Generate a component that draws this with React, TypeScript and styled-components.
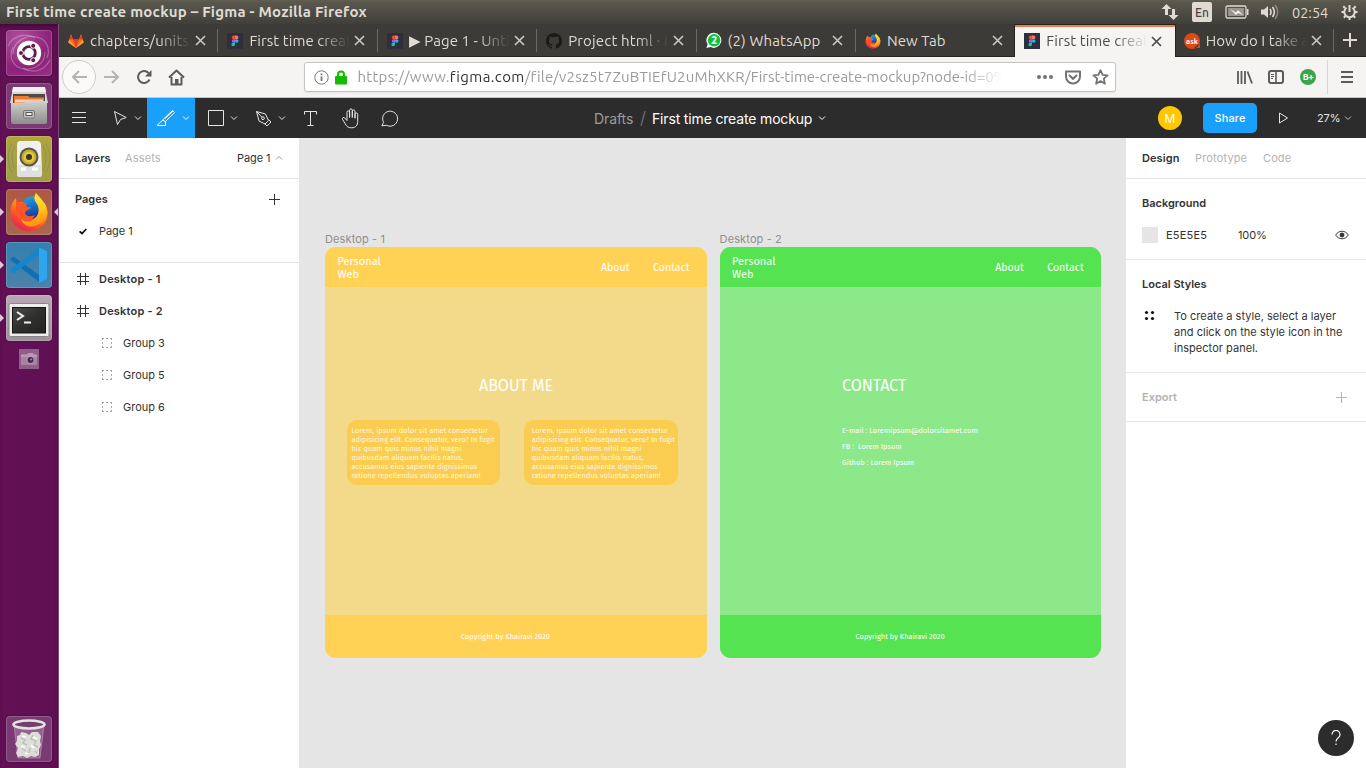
import React from "react";
import styled, { createGlobalStyle, css } from "styled-components";

const uiFont = `Ubuntu, "Noto Sans", "Open Sans", sans-serif`;
const figmaFont = `Inter, "Liberation Sans", sans-serif`;

const GlobalStyle = createGlobalStyle`
  * { box-sizing: border-box; }
  body { margin: 0; background: #fff; overflow: hidden; }
  svg { display: block; flex: none; }
`;

/* ---------- desktop shell ---------- */

const Screen = styled.div`
  width: 1366px;
  height: 768px;
  display: flex;
  flex-direction: column;
  overflow: hidden;
`;

const SystemBar = styled.header`
  height: 24px;
  flex: none;
  display: flex;
  align-items: center;
  justify-content: space-between;
  padding: 0 8px 0 6px;
  background: linear-gradient(#5f5d4f 0, #59574d 3px, #403f3a 100%);
  color: #dfdbd2;
  font-family: ${uiFont};
`;

const WindowTitle = styled.span`
  font-size: 15px;
  font-weight: 700;
  line-height: 24px;
  letter-spacing: 0.22px;
  white-space: pre;
`;

const Indicators = styled.div`
  display: flex;
  align-items: center;
  height: 24px;
`;

const LangBadge = styled.span`
  width: 20px;
  height: 20px;
  margin: 0 13px 0 13px;
  border-radius: 2px;
  background: #dfdbd2;
  color: #45443f;
  font-size: 12px;
  line-height: 21px;
  text-align: center;
  font-weight: 500;
`;

const Clock = styled.span`
  width: 37px;
  margin: 0 12px;
  font-size: 14.5px;
  letter-spacing: 0;
  white-space: nowrap;
`;

const Desktop = styled.div`
  flex: 1;
  display: flex;
  min-height: 0;
`;

const Launcher = styled.nav`
  width: 59px;
  flex: none;
  display: flex;
  flex-direction: column;
  align-items: center;
  gap: 7px;
  padding: 6px 1px 6px 0;
  background: linear-gradient(90deg, #641056, #5f1053);
  border-right: 1px solid #824a79;
  box-shadow: inset 0 4px 4px -2px #3d0735;
`;

const Slot = styled.div`
  width: 58px;
  height: 46px;
  flex: none;
  display: flex;
  align-items: center;
  justify-content: space-between;
`;

const Arrow = styled.i<{ $show?: boolean; $flip?: boolean }>`
  width: 0;
  height: 0;
  border: 4px solid transparent;
  ${(p) => (p.$flip ? css`border-left-width: 0; border-right-color: ${p.$show ? "#dcc9d9" : "transparent"};`
    : css`border-right-width: 0; border-left-color: ${p.$show ? "#dcc9d9" : "transparent"};`)}
`;

const Tile = styled.div<{ $bg: string }>`
  width: 46px;
  height: 46px;
  border-radius: 4px;
  background: ${(p) => p.$bg};
  box-shadow: inset 0 0 0 1px rgba(255, 255, 255, 0.18), 0 0 2px rgba(30, 0, 25, 0.5);
`;

const MiniTile = styled.div`
  width: 20px;
  height: 20px;
  margin-top: 1px;
  background: #8f5f8a;
`;

const Spacer = styled.div`
  flex: 1;
`;

/* ---------- browser ---------- */

const Browser = styled.div`
  flex: 1;
  min-width: 0;
  display: flex;
  flex-direction: column;
  font-family: ${uiFont};
`;

const TabStrip = styled.div`
  height: 33px;
  flex: none;
  display: flex;
  background: #3c3b37;
  border-bottom: 1px solid #262522;
`;

const Tab = styled.div<{ $active?: boolean; $divider?: boolean }>`
  position: relative;
  width: 159.4px;
  flex: none;
  height: ${(p) => (p.$active ? 33 : 32)}px;
  display: flex;
  align-items: center;
  padding: 1px 10px 0 9px;
  color: ${(p) => (p.$active ? "#4c4c4c" : "#dfdbd2")};
  ${(p) => p.$active && css`
    background: #f5f4f2;
    box-shadow: inset 0 1px #252422, inset 0 3px #f0794f, -1px 0 #252422, 1px 0 #252422;
  `}
  &::after {
    content: "";
    position: absolute;
    right: 0;
    top: 5px;
    width: 1px;
    height: 23px;
    background: ${(p) => (p.$divider ? "#6b6a65" : "transparent")};
  }
`;

const TabTitle = styled.span<{ $fade?: boolean; $ls?: number }>`
  width: 101px;
  margin-left: 6px;
  overflow: hidden;
  white-space: pre;
  font-size: 15px;
  line-height: 24px;
  letter-spacing: ${(p) => p.$ls ?? 0.05}px;
  ${(p) => p.$fade && css`mask-image: linear-gradient(90deg, #000 68px, transparent 101px);`}
`;

const CloseBox = styled.div`
  width: 16px;
  height: 16px;
  display: flex;
  align-items: center;
  justify-content: center;
  margin-left: auto;
`;

const NewTab = styled.div`
  flex: 1;
  display: flex;
  align-items: center;
  justify-content: center;
`;

const NavBar = styled.div`
  height: 41px;
  flex: none;
  display: flex;
  align-items: center;
  background: #f5f4f2;
  border-bottom: 1px solid #c9c7c4;
  color: #5b5b5a;
`;

const BackButton = styled.div`
  width: 34px;
  height: 34px;
  margin-left: 3px;
  border: 1px solid #cfcdca;
  border-radius: 50%;
  background: #faf9f8;
  display: flex;
  align-items: center;
  justify-content: center;
`;

const NavIcon = styled.div<{ $ml: number }>`
  margin-left: ${(p) => p.$ml}px;
`;

const UrlBar = styled.div`
  width: 812px;
  height: 30px;
  margin-left: 119px;
  display: flex;
  align-items: center;
  padding: 0 5px 0 9px;
  background: #fff;
  border: 1px solid #c6c4c0;
  border-radius: 3px;
  box-shadow: 0 1px 2px rgba(0, 0, 0, 0.06);
`;

const UrlText = styled.span`
  width: 645px;
  flex: none;
  margin-left: 10.5px;
  overflow: hidden;
  white-space: nowrap;
  font-size: 15px;
  line-height: 24px;
  color: #9b9b9b;
  mask-image: linear-gradient(90deg, #000 605px, transparent 645px);
`;

const UrlPart = styled.span<{ $ls: number; $host?: boolean }>`
  letter-spacing: ${(p) => p.$ls}px;
  color: ${(p) => (p.$host ? "#333" : "inherit")};
`;

const NavEnd = styled.div`
  margin-left: auto;
  height: 34px;
  padding: 0 13px;
  border-left: 1px solid #d7d5d2;
  display: flex;
  align-items: center;
`;

const ExtensionBadge = styled.div`
  width: 16px;
  height: 16px;
  margin: 0 11px 0 16px;
  border-radius: 50%;
  background: #3aa648;
  color: #fff;
  font: 700 9px/16px ${uiFont};
  text-align: center;
  letter-spacing: -0.2px;
`;

/* ---------- editor ---------- */

const Toolbar = styled.div`
  height: 40px;
  flex: none;
  display: flex;
  background: #2c2c2c;
  color: #e5e5e5;
  font-family: ${figmaFont};
`;

const Tool = styled.div<{ $w: number; $active?: boolean; $pl?: number }>`
  width: ${(p) => p.$w}px;
  height: 40px;
  display: flex;
  align-items: center;
  justify-content: center;
  gap: 6px;
  padding-left: ${(p) => p.$pl ?? 0}px;
  background: ${(p) => (p.$active ? "#18a0fb" : "transparent")};
`;

const FileName = styled.div`
  margin-left: 184px;
  display: flex;
  align-items: center;
  font-size: 14px;
  white-space: nowrap;
  color: #fff;
`;

const Folder = styled.span`
  width: 40px;
  color: #9b9b9b;
  letter-spacing: -0.1px;
`;

const Slash = styled.span`
  width: 18px;
  color: #7b7b7b;
  text-align: center;
  font-size: 17px;
  font-weight: 300;
`;

const FileTitle = styled.span`
  width: 161px;
  margin-right: 5px;
  letter-spacing: -0.16px;
`;

const Actions = styled.div`
  margin-left: auto;
  display: flex;
  align-items: center;
  padding-right: 14px;
`;

const Avatar = styled.div`
  width: 24px;
  height: 24px;
  border-radius: 50%;
  background: #ffc700;
  color: #fff;
  font-size: 12px;
  line-height: 25px;
  text-align: center;
`;

const ShareButton = styled.button`
  width: 54px;
  height: 30px;
  margin: 0 21px;
  padding: 0;
  border: 0;
  border-radius: 5px;
  background: #18a0fb;
  color: #fff;
  font: 500 11px ${figmaFont};
  letter-spacing: 0.1px;
`;

const Zoom = styled.span`
  width: 22px;
  margin: 0 5px 0 28px;
  font-size: 11px;
  letter-spacing: -0.15px;
`;

const Workspace = styled.div`
  flex: 1;
  min-height: 0;
  display: flex;
  font-family: ${figmaFont};
  font-size: 11px;
  line-height: 16px;
  letter-spacing: 0.055px;
  color: #333;
`;

const SidePanel = styled.aside<{ $w: number; $border?: boolean }>`
  width: ${(p) => p.$w}px;
  flex: none;
  background: #fff;
  border-right: ${(p) => (p.$border ? "1px solid #e5e5e5" : "0")};
`;

const Section = styled.section<{ $h: number; $pt?: number }>`
  height: ${(p) => p.$h}px;
  padding: ${(p) => p.$pt ?? 0}px 16px 0 16px;
  border-bottom: 1px solid #e5e5e5;
`;

const Row = styled.div<{ $h?: number; $pl?: number }>`
  height: ${(p) => p.$h ?? 32}px;
  display: flex;
  align-items: center;
  padding-left: ${(p) => p.$pl ?? 0}px;
`;

const Label = styled.span<{ $bold?: boolean; $muted?: boolean; $w?: number; $ls?: number }>`
  white-space: nowrap;
  font-weight: ${(p) => (p.$bold ? 600 : 400)};
  color: ${(p) => (p.$muted ? "#b3b3b3" : "#333")};
  width: ${(p) => (p.$w ? `${p.$w}px` : "auto")};
  letter-spacing: ${(p) => p.$ls ?? 0}px;
`;

const LayerList = styled.div`
  padding: 0 16px;
`;

const IconCell = styled.div`
  width: 16px;
  height: 16px;
  margin-right: 8px;
  display: flex;
  align-items: center;
  justify-content: center;
`;

const Swatch = styled.div`
  width: 16px;
  height: 16px;
  background: #e5e5e5;
  margin-right: 8px;
`;

const Hint = styled.p`
  margin: 0 0 0 17px;
  white-space: pre;
  letter-spacing: 0.035px;
`;

const StyleHint = styled.div`
  display: flex;
  margin-top: 16px;
`;

const HelpButton = styled.div`
  position: absolute;
  left: 1318px;
  top: 720px;
  width: 36px;
  height: 36px;
  border-radius: 50%;
  background: #2c2c2c;
  display: flex;
  align-items: center;
  justify-content: center;
`;

/* ---------- canvas ---------- */

const Canvas = styled.main`
  flex: 1;
  position: relative;
  background: #e5e5e5;
  overflow: hidden;
`;

const FrameNode = styled.div<{ $x: number; $w: number }>`
  position: absolute;
  left: ${(p) => p.$x}px;
  top: 93px;
  width: ${(p) => p.$w}px;
`;

const FrameLabel = styled.div`
  height: 16px;
  color: #8f8f8f;
  font-size: 11px;
  letter-spacing: 0.12px;
`;

const Artboard = styled.div<{ $bg: string }>`
  height: 411px;
  border-radius: 11px;
  overflow: hidden;
  display: flex;
  flex-direction: column;
  background: ${(p) => p.$bg};
  color: #fff;
  font-family: "Fira Sans", "Noto Sans", sans-serif;
  letter-spacing: 0;
`;

const SiteHeader = styled.div<{ $bg: string }>`
  height: 40px;
  flex: none;
  display: flex;
  align-items: center;
  padding: 1px 17px 0 12.4px;
  background: ${(p) => p.$bg};
  font-size: 10.6px;
  line-height: 13px;
`;

const Brand = styled.div`
  flex: 1;
  font-size: 11px;
  letter-spacing: 0.03px;
`;

const SiteLink = styled.span<{ $w: number }>`
  width: ${(p) => p.$w}px;
  white-space: nowrap;
`;

const SiteBody = styled.div<{ $pl?: number }>`
  flex: 1;
  padding: 88px 0 0 ${(p) => p.$pl ?? 0}px;
`;

const Heading = styled.h1<{ $pl?: number }>`
  margin: 0;
  padding-left: ${(p) => p.$pl ?? 0}px;
  font-size: 16.2px;
  line-height: 21px;
  font-weight: 400;
  letter-spacing: -0.13px;
`;

const Cards = styled.div`
  display: flex;
  gap: 24px;
  margin-top: 24.2px;
  padding-left: 21.5px;
`;

const Card = styled.div<{ $pl: number }>`
  width: 153.5px;
  height: 65px;
  border-radius: 10px;
  background: #facd50;
  padding: 5.8px 0 0 ${(p) => p.$pl}px;
  font-size: 7.45px;
  line-height: 9px;
  white-space: pre;
  color: #fff6dc;
`;

const ContactLine = styled.div`
  height: 16px;
  font-size: 7.45px;
  line-height: 16px;
  white-space: pre;
`;

const ContactList = styled.div`
  margin-top: 27px;
`;

const SiteFooter = styled.div<{ $bg: string }>`
  height: 43px;
  flex: none;
  padding-left: 136px;
  background: ${(p) => p.$bg};
  font-size: 7.45px;
  line-height: 43px;
  white-space: nowrap;
`;

/* ---------- icons ---------- */

const Chevron = ({ up, color = "#e5e5e5" }: { up?: boolean; color?: string }) => (
  <svg width="8" height="8" viewBox="0 0 8 8" fill="none" stroke={color}>
    <path d={up ? "M1 5.5 4 2.5 7 5.5" : "M1 2.5 4 5.5 7 2.5"} />
  </svg>
);

const Cross = ({ color }: { color: string }) => (
  <svg width="11" height="11" viewBox="0 0 11 11" stroke={color} strokeWidth="1.7">
    <path d="M1 1 10 10M10 1 1 10" />
  </svg>
);

const Plus = ({ size, color, sw = 1 }: { size: number; color: string; sw?: number }) => (
  <svg width={size} height={size} viewBox={`0 0 ${size} ${size}`} stroke={color} strokeWidth={sw}>
    <path d={`M${size / 2} 0V${size}M0 ${size / 2}H${size}`} />
  </svg>
);

const FigmaLogo = () => (
  <svg width="16" height="16" viewBox="0 0 16 16">
    <rect width="16" height="16" fill="#2d2f3f" />
    <path d="M8 2.6H6.6a1.8 1.8 0 0 0 0 3.6H8z" fill="#f24e1e" />
    <path d="M8 2.6h1.6a1.8 1.8 0 0 1 0 3.6H8z" fill="#ff7262" />
    <path d="M8 6.2H6.6a1.8 1.8 0 0 0 0 3.6H8z" fill="#a259ff" />
    <circle cx="9.7" cy="8" r="1.8" fill="#1abcfe" />
    <path d="M8 9.8H6.6a1.8 1.8 0 1 0 1.4 1.8z" fill="#0acf83" />
  </svg>
);

const GitlabLogo = () => (
  <svg width="16" height="16" viewBox="0 0 16 16">
    <path d="M8 15 0.3 9.4 3 1.2 5 6.6h6l2-5.4 2.7 8.2z" fill="#fc6d26" />
    <path d="M8 15 5 6.6h6z" fill="#e24329" />
    <path d="M0.3 9.4 1.2 6.6 8 15zM15.7 9.4 14.8 6.6 8 15z" fill="#fca326" />
    <path d="M3 1.2 5 6.6H1.2zM13 1.2 11 6.6h3.8z" fill="#e24329" />
  </svg>
);

const GithubLogo = () => (
  <svg width="16" height="16" viewBox="0 0 16 16" fill="#1b1a19">
    <path d="M8 0C3.58 0 0 3.58 0 8c0 3.54 2.29 6.53 5.47 7.59.4.07.55-.17.55-.38 0-.19-.01-.82-.01-1.49-2.01.37-2.53-.49-2.69-.94-.09-.23-.48-.94-.82-1.13-.28-.15-.68-.52-.01-.53.63-.01 1.08.58 1.23.82.72 1.21 1.87.87 2.33.66.07-.52.28-.87.51-1.07-1.78-.2-3.64-.89-3.64-3.95 0-.87.31-1.59.82-2.15-.08-.2-.36-1.02.08-2.12 0 0 .67-.21 2.2.82a7.6 7.6 0 0 1 4 0c1.53-1.04 2.2-.82 2.2-.82.44 1.1.16 1.92.08 2.12.51.56.82 1.27.82 2.15 0 3.07-1.87 3.75-3.65 3.95.29.25.54.73.54 1.48 0 1.07-.01 1.93-.01 2.2 0 .21.15.46.55.38A8 8 0 0 0 16 8c0-4.42-3.58-8-8-8z" />
  </svg>
);

const WhatsappBadge = () => (
  <svg width="16" height="17" viewBox="0 0 17 17">
    <path d="M8.5.3a8 8 0 1 1-3.7 15.2L.5 16.6l1.2-4A8 8 0 0 1 8.5.3z" fill="#fff" />
    <circle cx="8.6" cy="8.3" r="6.6" fill="#09c43c" />
    <text x="8.6" y="12.1" textAnchor="middle" fill="#fff" fontFamily="Noto Sans" fontWeight="700" fontSize="10.5">2</text>
  </svg>
);

const FirefoxLogo = ({ size }: { size: number }) => (
  <svg width={size} height={size} viewBox="0 0 40 40">
    <defs>
      <linearGradient id="fxBody" x1="0.8" y1="0" x2="0.2" y2="1">
        <stop offset="0" stopColor="#ffe226" />
        <stop offset="0.35" stopColor="#ff9a1c" />
        <stop offset="0.62" stopColor="#ff5a1f" />
        <stop offset="1" stopColor="#e8175d" />
      </linearGradient>
      <linearGradient id="fxGlobe" x1="0.3" y1="0" x2="0.5" y2="1">
        <stop offset="0" stopColor="#1ba4ee" />
        <stop offset="1" stopColor="#1b2f97" />
      </linearGradient>
      <linearGradient id="fxFlame" x1="0" y1="0" x2="0.3" y2="1">
        <stop offset="0" stopColor="#fff04a" />
        <stop offset="0.6" stopColor="#ffcf1d" />
        <stop offset="1" stopColor="#ff9317" />
      </linearGradient>
    </defs>
    <path d="M1.500 22C1 14 4 9 7 6c0 3 1 4 2 5 2-1 4-1 6 0 2-5 6-7 11-6 8 2 13 9 12.500 17-.500 10-8.500 17-18.500 17S2 32 1.500 22z" fill="url(#fxBody)" />
    <path d="M15 8c3-3.500 8-4.500 12-2 4 3 5 8 4 13s-5 8-9.500 8S13 24 13 20z" fill="url(#fxGlobe)" />
    <path d="M27 1c-3 5-1 8 1 11 3 5 2 12-4 16-4 2.500-9 2-12-1 2 6 8 9 14 7 7-2 12-8 12-15C38 12 32 7 27 1z" fill="url(#fxFlame)" />
    <path d="M7 7c1 3 4 4 6 4 2-1 4-1 5 0-1 1-1 3 0 4h4c-1 3-6 3-6 6 1 4 6 4 10 2-2 5-7 7-12 5-5-2-8-7-7-12z" fill="#ff5426" />
  </svg>
);

const AskLogo = () => (
  <svg width="16" height="16" viewBox="0 0 16 16">
    <path d="M8 0a8 8 0 1 1 0 16A8 8 0 0 1 8 0zM10 15h6v-5z" fill="#dd4814" />
    <text x="8" y="10.5" textAnchor="middle" fill="#fff" fontFamily="Ubuntu, Noto Sans" fontWeight="700" fontSize="7.5">ask</text>
  </svg>
);

const DashIcon = () => (
  <svg width="46" height="46" viewBox="0 0 46 46" fill="none">
    <g stroke="#fff" strokeOpacity="0.28" strokeWidth="1.2">
      <path d="M7 24C7 10 24 2 36 9c6 4 8 12 5 19" />
      <path d="M2 16C8 4 22 3 29 8M39 22c0 14-16 21-27 15C6 33 3 26 7 17" />
      <path d="M44 30C37 43 24 43 17 38" />
    </g>
    <circle cx="23" cy="23" r="12.2" fill="#fff" />
    <circle cx="23" cy="23" r="6.3" stroke="#5c1c4f" strokeWidth="2.8" />
    <g fill="#5c1c4f" stroke="#fff" strokeWidth="1">
      <circle cx="15" cy="23" r="2.5" />
      <circle cx="27.2" cy="15.8" r="2.5" />
      <circle cx="27.2" cy="30.2" r="2.5" />
    </g>
  </svg>
);

const FilesIcon = () => (
  <svg width="46" height="46" viewBox="0 0 46 46">
    <defs>
      <linearGradient id="cab" x1="0" y1="0" x2="0" y2="1">
        <stop offset="0" stopColor="#d0d0ce" />
        <stop offset="1" stopColor="#8d8d8a" />
      </linearGradient>
    </defs>
    <path d="M7 5h32l3 15H4z" fill="#d8d6d4" />
    <path d="M7 4h32l1 5H6z" fill="#f1f0ef" />
    <rect x="7" y="11" width="32" height="10" fill="#4d4a48" />
    <path d="M8 13h14l2 1.500h14v6H8z" fill="#e87a35" />
    <path d="M9 16.500h28v3H9z" fill="#f6ceb0" />
    <path d="M5 20h12l2-2h22v21a2 2 0 0 1-2 2H7a2 2 0 0 1-2-2z" fill="url(#cab)" />
    <rect x="17.5" y="27.5" width="11" height="7.5" rx="1.5" fill="#c4c4c2" stroke="#777" />
    <rect x="20" y="29.5" width="6" height="3" fill="#eee" stroke="#555" />
  </svg>
);

const SpeakerIcon = () => (
  <svg width="46" height="46" viewBox="0 0 46 46" fill="none">
    <g stroke="#6d8a6a" strokeOpacity="0.6">
      <path d="M9 10c-4 6-4 16 0 24M6 8c-5 8-5 20 0 28M37 10c4 6 4 16 0 24M40 8c5 8 5 20 0 28" />
    </g>
    <path d="M14 5h17c3 0 4 2 4 4l1 28c0 3-1 4-3 4H14c-3 0-3-2-3-4V9c0-3 1-4 3-4z" fill="#f0f0ef" />
    <path d="M12 29h24v8c0 3-1 4-3 4H14c-3 0-3-2-3-4z" fill="#e0e0e0" />
    <circle cx="23" cy="21" r="9.5" fill="#57544a" />
    <circle cx="23" cy="21" r="7.5" fill="#c6aa2d" />
    <circle cx="23" cy="21" r="5.5" fill="#e2c83d" />
    <circle cx="23" cy="21" r="3" fill="#3a362c" />
    <path d="M15 33h5M26 33h6" stroke="#fff" strokeWidth="3" />
  </svg>
);

const CodeIcon = () => (
  <svg width="46" height="46" viewBox="0 0 46 46">
    <path d="M4 17.500l3.500-3L33 33v7z" fill="#0f6fb4" />
    <path d="M4 28l3.500 3.500L33 13V5.500z" fill="#1685cc" />
    <path d="M33 5.500 41 9v28l-8 4z" fill="#2ea6ee" />
  </svg>
);

const TerminalIcon = () => (
  <svg width="46" height="46" viewBox="0 0 46 46">
    <defs>
      <linearGradient id="term" x1="0" y1="0" x2="1" y2="1">
        <stop offset="0" stopColor="#4c4c49" />
        <stop offset="0.5" stopColor="#2f2f2d" />
        <stop offset="1" stopColor="#232322" />
      </linearGradient>
    </defs>
    <rect x="3" y="8.5" width="40" height="33" rx="1.5" fill="#eeeeec" stroke="#8a888a" />
    <rect x="6.5" y="12.5" width="33" height="25.5" fill="url(#term)" stroke="#161616" />
    <path d="M11 17l6 4-6 4M18 27.500h7" fill="none" stroke="#f1f1f1" strokeWidth="2" />
  </svg>
);

const CameraIcon = () => (
  <svg width="20" height="20" viewBox="0 0 20 20">
    <rect x="2" y="5" width="16" height="11" rx="1" fill="#a583a1" />
    <path d="M2 6h6l1-2h5l1 2h3v2H2z" fill="#b899b5" />
    <circle cx="11.5" cy="11" r="4" fill="#b597b2" />
    <circle cx="11.5" cy="11" r="3" fill="#4a2748" />
    <circle cx="12.2" cy="10.5" r="1" fill="#b07aab" />
  </svg>
);

const TrashIcon = () => (
  <svg width="46" height="46" viewBox="0 0 46 46">
    <path d="M8 9h30l-4 33H12z" fill="#fff" fillOpacity="0.2" stroke="#cbb6c8" strokeOpacity="0.5" />
    <path d="M11 20l3-1 1-3 5 1 3 2 3-3 6 0 3 4-1 5 1 4-2 4 0 6-4 2-4-1-4 2-4-2-5 1-2-4 2-5-3-4 2-3z" fill="#deded9" />
    <path d="M15 22l4 2-2 3 4 2M27 19l-2 4 5 2-2 4 4 2M16 33l4 2M24 32l-1 5M29 35l2 2" fill="none" stroke="#b9b9b4" strokeWidth="1.2" />
    <path d="M16 20l4 1M27 21l4 2M15 30l4 1M25 29l3 3M19 37l3 1" fill="none" stroke="#fff" strokeWidth="1.8" />
    <ellipse cx="23" cy="8.5" rx="15.5" ry="4" fill="#72406a" stroke="#e4e2e3" strokeWidth="2.6" />
  </svg>
);

const UpDownIcon = () => (
  <svg width="18" height="16" viewBox="0 0 18 16" fill="#dfdbd2">
    <path d="M5.500 0 10.500 5H7v6H4V5H.500zM12.500 16l-5-5H11V5h3v6h3.500z" />
  </svg>
);

const BatteryIcon = () => (
  <svg width="24" height="14" viewBox="0 0 24 14" fill="none">
    <rect x="1" y="1" width="20" height="12" rx="1.5" stroke="#dfdbd2" strokeWidth="1.3" />
    <rect x="3" y="3" width="16" height="8" fill="#98958d" />
    <path d="M22 4h1.500v6H22z" fill="#dfdbd2" />
    <path d="M5 4l6 3.500 2-2.500 5 5-5-2-2 2z" fill="#f5f2ea" />
  </svg>
);

const VolumeIcon = () => (
  <svg width="20" height="16" viewBox="0 0 20 16" fill="none" stroke="#dfdbd2" strokeWidth="1.6">
    <path d="M1 5.500h3L8 2v12l-4-3.500H1z" fill="#dfdbd2" stroke="none" />
    <path d="M10 5c1.200 1.800 1.200 4.200 0 6M12.500 3c2.200 3 2.200 7 0 10" />
    <path d="M15 1c3.500 4 3.500 10 0 14" strokeOpacity="0.4" />
  </svg>
);

const PowerIcon = () => (
  <svg width="17" height="18" viewBox="0 0 17 18" fill="none" stroke="#dfdbd2" strokeWidth="2">
    <path d="M5.500 4.800a5.200 5.200 0 1 0 6 0M8.500 2v7" />
    <path d="M2.300 3.300 4 5M14.700 3.300 13 5M.500 9h2.600M16.500 9h-2.600M2.800 14.700l1.800-1.800M14.200 14.700l-1.800-1.800M8.500 17v-2.500" />
  </svg>
);

const tools = {
  menu: <svg width="14" height="12" viewBox="0 0 14 12" stroke="#e5e5e5"><path d="M0 .5h14M0 5.500h14M0 10.500h14" /></svg>,
  move: <svg width="16" height="16" viewBox="0 0 16 16" fill="none" stroke="#e5e5e5"><path d="M2.500 1.500 14.200 7.500 8.500 9.500 5.500 14.500z" /></svg>,
  slice: (
    <svg width="20" height="18" viewBox="0 0 20 18" fill="none" stroke="#fff">
      <path d="M1 16.500 16.500 1.500 18.500 3.500 9.500 12.500v4zM6.500 11.200l3 1.300M9 9.500 17 2" />
    </svg>
  ),
  rect: <svg width="16" height="16" viewBox="0 0 16 16" fill="none" stroke="#e5e5e5"><path d="M.5.5h15v15H.5z" /></svg>,
  pen: (
    <svg width="17" height="17" viewBox="0 0 17 17" fill="none" stroke="#e5e5e5">
      <path d="M1.500 1.500 10.500 4 13.500 10.500 10 14 4 11zM1.500 1.500 7 7.200M13.500 9.500l2.500 2.500-4 4-2.500-2.500" />
      <circle cx="8" cy="8.200" r="1.400" />
    </svg>
  ),
  text: <svg width="14" height="17" viewBox="0 0 14 17" fill="none" stroke="#e5e5e5"><path d="M.5 4.500V1.500h12v3M6.500 1.500v14M3.500 15.500h6" /></svg>,
  hand: (
    <svg width="19" height="21" viewBox="0 0 19 21" fill="none" stroke="#e5e5e5" strokeLinejoin="round">
      <path d="M6 11.500V4.200a1.300 1.300 0 0 1 2.600 0V9.500 2.300a1.300 1.300 0 0 1 2.700 0V9.500 3.300a1.300 1.300 0 0 1 2.700 0v7-4a1.300 1.300 0 0 1 2.700 0v7c0 4-2 6.500-6 6.500-3.500 0-5-1.200-6.500-4L1.500 11.300c-.7-1.700 1.200-2.500 2.300-1.300L6 12.500z" />
    </svg>
  ),
  comment: <svg width="18" height="17" viewBox="0 0 18 17" fill="none" stroke="#e5e5e5"><path d="M.8 15.800 2.600 12.400A7.500 7.500 0 1 1 5.600 15.300z" /></svg>,
};

const FrameIcon = () => (
  <svg width="12" height="12" viewBox="0 0 12 12" stroke="#333"><path d="M3.500 0v12M8.500 0v12M0 3.500h12M0 8.500h12" /></svg>
);

const GroupIcon = () => (
  <svg width="10" height="10" viewBox="0 0 10 10" fill="none" stroke="#a8a8a8">
    <path d="M0 .5h2M4 .5h2M8 .5h2M0 9.500h2M4 9.500h2M8 9.500h2M.5 1v1M.5 4v2M.5 8v1M9.500 1v1M9.500 4v2M9.500 8v1" />
  </svg>
);

/* ---------- page ---------- */

const lorem = [
  "Lorem, ipsum dolor sit amet consectetur",
  "adipisicing elit. Consequatur, vero? In fugit",
  "hic quam quis minus nihil magni",
  "quibusdam aliquam facilis natus,",
  "accusamus eius sapiente dignissimos",
  "ratione repellendus voluptas aperiam!",
];

const tabs: { icon: React.ReactNode; title: string; fade?: boolean; active?: boolean; divider?: boolean; ls?: number }[] = [
  { icon: <GitlabLogo />, title: "chapters/units", fade: true, divider: true, ls: 0.15 },
  { icon: <FigmaLogo />, title: "First time creat", fade: true, divider: true },
  { icon: <FigmaLogo />, title: "▶ Page 1 - Unti", fade: true, divider: true },
  { icon: <GithubLogo />, title: "Project html · I", fade: true, divider: true, ls: 0.15 },
  { icon: <WhatsappBadge />, title: "(2) WhatsApp", divider: true, ls: 0.15 },
  { icon: <FirefoxLogo size={16} />, title: "New Tab" },
  { icon: <FigmaLogo />, title: "First time creat", fade: true, active: true },
  { icon: <AskLogo />, title: "How do I take a", fade: true, divider: true },
];

const launcherApps = [
  { bg: "radial-gradient(circle at 30% 20%, #b0509e, #8c2479 60%, #963287)", icon: <DashIcon /> },
  { bg: "#7b3a73", icon: <FilesIcon /> },
  { bg: "linear-gradient(#b0a53c, #a29d46)", icon: <SpeakerIcon />, running: true },
  { bg: "linear-gradient(#ad5845, #a86850)", icon: <FirefoxLogo size={40} />, running: true, focused: true },
  { bg: "linear-gradient(#357fae, #4b82ab)", icon: <CodeIcon />, running: true },
  { bg: "linear-gradient(#b7a8b6, #9f8f9d)", icon: <TerminalIcon />, running: true },
];

const Centered = styled.div`
  width: 46px;
  height: 46px;
  display: flex;
  align-items: center;
  justify-content: center;
`;

function SystemHeader() {
  return (
    <SystemBar>
      <WindowTitle>First time create mockup – Figma - Mozilla Firefox</WindowTitle>
      <Indicators>
        <UpDownIcon />
        <LangBadge>En</LangBadge>
        <BatteryIcon />
        <NavIcon $ml={11}><VolumeIcon /></NavIcon>
        <Clock>02:54</Clock>
        <PowerIcon />
      </Indicators>
    </SystemBar>
  );
}

function Dock() {
  return (
    <Launcher>
      {launcherApps.map((app, i) => (
        <Slot key={i}>
          <Arrow $show={app.running} />
          <Tile $bg={app.bg}><Centered>{app.icon}</Centered></Tile>
          <Arrow $flip $show={app.focused} />
        </Slot>
      ))}
      <MiniTile><CameraIcon /></MiniTile>
      <Spacer />
      <Tile $bg="#7b3a73"><TrashIcon /></Tile>
    </Launcher>
  );
}

function BrowserChrome() {
  return (
    <>
      <TabStrip>
        {tabs.map((t, i) => (
          <Tab key={i} $active={t.active} $divider={t.divider}>
            {t.icon}
            <TabTitle $fade={t.fade} $ls={t.ls}>{t.title}</TabTitle>
            <CloseBox><Cross color={t.active ? "#4c4c4c" : "#c9c6be"} /></CloseBox>
          </Tab>
        ))}
        <NewTab><Plus size={14} color="#dfdbd2" sw={2} /></NewTab>
      </TabStrip>
      <NavBar>
        <BackButton>
          <svg width="16" height="14" viewBox="0 0 16 14" fill="none" stroke="#b5b4b2" strokeWidth="2"><path d="M8 1 2 7l6 6M2 7h14" /></svg>
        </BackButton>
        <NavIcon $ml={8}>
          <svg width="16" height="14" viewBox="0 0 16 14" fill="none" stroke="#b5b4b2" strokeWidth="2"><path d="M8 1l6 6-6 6M14 7H0" /></svg>
        </NavIcon>
        <NavIcon $ml={16}>
          <svg width="16" height="16" viewBox="0 0 16 16" fill="none" stroke="#5b5b5a" strokeWidth="2"><path d="M13.500 10.500A6 6 0 1 1 12.500 4" /><path d="M15.500 1v6.500H9z" fill="#5b5b5a" stroke="none" /></svg>
        </NavIcon>
        <NavIcon $ml={16}>
          <svg width="17" height="17" viewBox="0 0 17 17" fill="none" stroke="#5b5b5a" strokeWidth="2" strokeLinejoin="round"><path d="M1 8.500 8.500 1.500 16 8.500M3.500 8v7.500h10V8" /><path d="M7 10h3.500v6H7z" fill="#5b5b5a" stroke="none" /></svg>
        </NavIcon>
        <UrlBar>
          <svg width="15" height="15" viewBox="0 0 15 15" fill="none" stroke="#767676"><circle cx="7.5" cy="7.5" r="6.7" /><path d="M7.500 6.500V11M7.500 3.500v1.700" strokeWidth="1.8" /></svg>
          <NavIcon $ml={6}>
            <svg width="12" height="15" viewBox="0 0 12 15"><path d="M3 7V4.500a3 3 0 0 1 6 0V7" fill="none" stroke="#12bc00" strokeWidth="2" /><rect y="6" width="12" height="8.5" rx="1" fill="#12bc00" /></svg>
          </NavIcon>
          <UrlText>
            <UrlPart $ls={0.25}>https://www.</UrlPart>
            <UrlPart $ls={0.4} $host>figma.com</UrlPart>
            <UrlPart $ls={0.2}>/file/v2sz5t7ZuBTIEfU2uMhXKR/</UrlPart>
            <UrlPart $ls={0}>First-time-create-mockup?node-id=0%3A1</UrlPart>
          </UrlText>
          <NavIcon $ml={34}>
            <svg width="16" height="4" viewBox="0 0 16 4" fill="#737373"><circle cx="2" cy="2" r="2" /><circle cx="8" cy="2" r="2" /><circle cx="14" cy="2" r="2" /></svg>
          </NavIcon>
          <NavIcon $ml={12}>
            <svg width="16" height="15" viewBox="0 0 16 15" fill="none" stroke="#737373" strokeWidth="2"><path d="M1 2.500V1.500h14V6.500a7 7 0 0 1-14 0z" strokeLinejoin="round" /><path d="M4.500 5.500 8 8.800l3.500-3.300" strokeLinecap="round" /></svg>
          </NavIcon>
          <NavIcon $ml={11}>
            <svg width="17" height="16" viewBox="0 0 17 16" fill="none" stroke="#737373" strokeWidth="1.8" strokeLinejoin="round"><path d="M8.500 1.200 10.600 5.800l5 .5-3.800 3.400 1.100 5-4.400-2.600-4.400 2.600 1.100-5L1.400 6.300l5-.5z" /></svg>
          </NavIcon>
        </UrlBar>
        <NavIcon $ml={121}>
          <svg width="16" height="15" viewBox="0 0 16 15" fill="none" stroke="#5b5b5a" strokeWidth="1.8"><path d="M1 1v13M4.500 1v13M8 1v13M10.500 1.500l4.500 12" /></svg>
        </NavIcon>
        <NavIcon $ml={15}>
          <svg width="16" height="14" viewBox="0 0 16 14" fill="none" stroke="#5b5b5a"><rect x="1" y="1" width="14" height="12" rx="2" strokeWidth="2" /><path d="M8 1v12" strokeWidth="1.6" /><path d="M3 4.500h3M3 6.500h3M3 8.500h2" /></svg>
        </NavIcon>
        <ExtensionBadge>B+</ExtensionBadge>
        <NavEnd>
          <svg width="12" height="12" viewBox="0 0 12 12" stroke="#5b5b5a" strokeWidth="1.8"><path d="M0 1h12M0 6h12M0 11h12" /></svg>
        </NavEnd>
      </NavBar>
    </>
  );
}

function EditorToolbar() {
  return (
    <Toolbar>
      <Tool $w={40}>{tools.menu}</Tool>
      <Tool $w={48} $pl={8}>{tools.move}<Chevron /></Tool>
      <Tool $w={48} $active $pl={4}>{tools.slice}<Chevron color="#fff" /></Tool>
      <Tool $w={48} $pl={8}>{tools.rect}<Chevron /></Tool>
      <Tool $w={48} $pl={7}>{tools.pen}<Chevron /></Tool>
      <Tool $w={39}>{tools.text}</Tool>
      <Tool $w={40}>{tools.hand}</Tool>
      <Tool $w={40}>{tools.comment}</Tool>
      <FileName>
        <Folder>Drafts</Folder>
        <Slash>/</Slash>
        <FileTitle>First time create mockup</FileTitle>
        <Chevron color="#fff" />
      </FileName>
      <Actions>
        <Avatar>M</Avatar>
        <ShareButton>Share</ShareButton>
        <svg width="11" height="12" viewBox="0 0 11 12" fill="none" stroke="#e5e5e5"><path d="M1.500 1 9.500 6 1.500 11z" /></svg>
        <Zoom>27%</Zoom>
        <Chevron color="#b8b8b8" />
      </Actions>
    </Toolbar>
  );
}

function LayersPanel() {
  return (
    <SidePanel $w={241} $border>
      <Section $h={41}>
        <Row $h={40}>
          <Label $bold $w={50}>Layers</Label>
          <Label $muted $w={112} $ls={0.15}>Assets</Label>
          <Label $w={38} $ls={-0.1}>Page 1</Label>
          <Chevron up color="#999" />
        </Row>
      </Section>
      <Section $h={84} $pt={4}>
        <Row>
          <Label $bold>Pages</Label>
          <Spacer />
          <Plus size={11} color="#333" />
          <NavIcon $ml={3} />
        </Row>
        <Row>
          <IconCell><svg width="8" height="7" viewBox="0 0 8 7" fill="none" stroke="#111" strokeWidth="1.8"><path d="M.6 3.300 3 5.500 7.300 1" /></svg></IconCell>
          <Label $ls={-0.05}>Page 1</Label>
        </Row>
      </Section>
      <LayerList>
        {["Desktop - 1", "Desktop - 2"].map((name) => (
          <Row key={name}><IconCell><FrameIcon /></IconCell><Label $bold $ls={0.2}>{name}</Label></Row>
        ))}
        {["Group 3", "Group 5", "Group 6"].map((name) => (
          <Row key={name} $pl={24}><IconCell><GroupIcon /></IconCell><Label>{name}</Label></Row>
        ))}
      </LayerList>
    </SidePanel>
  );
}

function DesignPanel() {
  return (
    <SidePanel $w={240}>
      <Section $h={41}>
        <Row $h={40}>
          <Label $bold $w={53} $ls={0.08}>Design</Label>
          <Label $muted $w={68} $ls={0.15}>Prototype</Label>
          <Label $muted $ls={0.1}>Code</Label>
        </Row>
      </Section>
      <Section $h={81} $pt={8}>
        <Row><Label $bold>Background</Label></Row>
        <Row>
          <Swatch />
          <Label $w={72} $ls={0.2}>E5E5E5</Label>
          <Label $ls={-0.1}>100%</Label>
          <Spacer />
          <svg width="14" height="10" viewBox="0 0 14 10" fill="none" stroke="#333"><path d="M.7 5C3.500 0 10.500 0 13.300 5 10.500 10 3.500 10 .7 5z" /><circle cx="7" cy="5" r="2" fill="#333" /></svg>
          <NavIcon $ml={1} />
        </Row>
      </Section>
      <Section $h={113} $pt={16}>
        <Label $bold>Local Styles</Label>
        <StyleHint>
          <svg width="15" height="16" viewBox="0 0 15 16" fill="#111"><circle cx="4.5" cy="4.5" r="1.6" /><circle cx="10.5" cy="4.5" r="1.6" /><circle cx="4.5" cy="10.5" r="1.6" /><circle cx="10.5" cy="10.5" r="1.6" /></svg>
          <Hint>{"To create a style, select a layer\nand click on the style icon in the\ninspector panel."}</Hint>
        </StyleHint>
      </Section>
      <Section $h={49}>
        <Row $h={48}>
          <Label $bold $muted>Export</Label>
          <Spacer />
          <Plus size={11} color="#b3b3b3" />
          <NavIcon $ml={3} />
        </Row>
      </Section>
    </SidePanel>
  );
}

function Site({ accent, bg, children }: { accent: string; bg: string; children: React.ReactNode }) {
  return (
    <Artboard $bg={bg}>
      <SiteHeader $bg={accent}>
        <Brand>Personal<br />Web</Brand>
        <SiteLink $w={52}>About</SiteLink>
        <SiteLink $w={37}>Contact</SiteLink>
      </SiteHeader>
      {children}
      <SiteFooter $bg={accent}>Copyright by Khairavi 2020</SiteFooter>
    </Artboard>
  );
}

export default function App() {
  return (
    <Screen>
      <GlobalStyle />
      <SystemHeader />
      <Desktop>
        <Dock />
        <Browser>
          <BrowserChrome />
          <EditorToolbar />
          <Workspace>
            <LayersPanel />
            <Canvas>
              <FrameNode $x={25} $w={382}>
                <FrameLabel>Desktop - 1</FrameLabel>
                <Site accent="#ffd255" bg="#f3da8a">
                  <SiteBody>
                    <Heading $pl={154}>ABOUT ME</Heading>
                    <Cards>
                      {[5, 7.7].map((pl) => (
                        <Card key={pl} $pl={pl}>
                          {lorem.map((line) => <div key={line}>{line}</div>)}
                        </Card>
                      ))}
                    </Cards>
                  </SiteBody>
                </Site>
              </FrameNode>
              <FrameNode $x={419.6} $w={381.6}>
                <FrameLabel>Desktop - 2</FrameLabel>
                <Site accent="#55e352" bg="#8de88a">
                  <SiteBody $pl={122.5}>
                    <Heading>CONTACT</Heading>
                    <ContactList>
                      <ContactLine>E-mail : Loremipsum@dolorsitamet.com</ContactLine>
                      <ContactLine>{"FB :  Lorem Ipsum"}</ContactLine>
                      <ContactLine>Github : Lorem Ipsum</ContactLine>
                    </ContactList>
                  </SiteBody>
                </Site>
              </FrameNode>
            </Canvas>
            <DesignPanel />
          </Workspace>
        </Browser>
      </Desktop>
      <HelpButton>
        <svg width="10" height="16" viewBox="0 0 10 16" fill="none" stroke="#fff" strokeWidth="1.2"><path d="M1 4.500a4 4 0 1 1 6.500 3C5.500 9 5 9.500 5 11.500M5 13.500v1.500" /></svg>
      </HelpButton>
    </Screen>
  );
}
